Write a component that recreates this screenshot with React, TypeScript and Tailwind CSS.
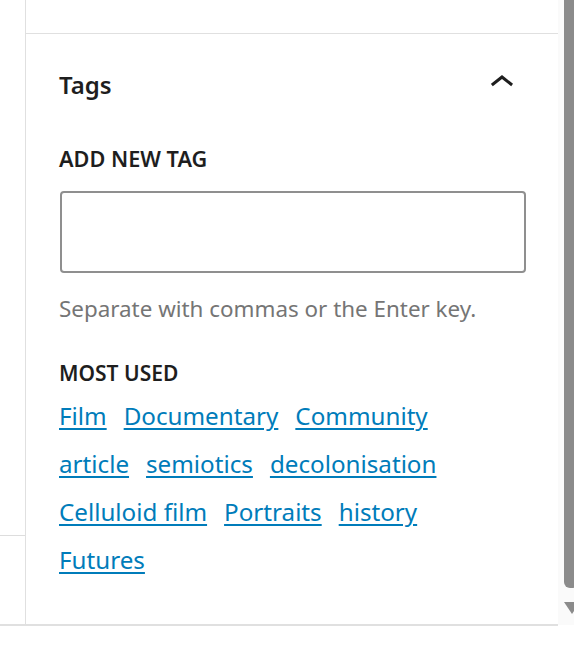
import React from "react";

const rows: string[][] = [
  ["Film", "Documentary", "Community"],
  ["article", "semiotics", "decolonisation"],
  ["Celluloid film", "Portraits", "history"],
  ["Futures"],
];

export default function App() {
  return (
    <div
      className="flex w-[574px] h-[646px] bg-white overflow-hidden"
      style={{ fontFamily: '"Noto Sans", "Open Sans", sans-serif' }}
    >
      {/* left strip */}
      <div className="w-[25px] h-[626px] shrink-0 border-b-2 border-[#e0e0e0]">
        <div className="h-[536px] border-b border-[#dddddd]" />
      </div>

      {/* panel */}
      <div className="w-[533px] h-[626px] shrink-0 border-l border-b-2 border-[#e0e0e0] flex flex-col">
        <div className="h-[34px] border-b border-[#e0e0e0]" />
        <div className="pl-[33px] pr-[32px]">
          <div className="mt-[25px] h-[48px] flex items-center justify-between">
            <div className="text-[24px] leading-[36px] font-semibold text-[#1e1e1e] mt-[3px]">Tags</div>
            <svg width="48" height="48" viewBox="0 0 24 24" className="shrink-0">
              <path d="M6.5 12.4L12 8l5.5 4.4-.9 1.2L12 10l-4.6 3.6-1-1.2z" fill="#1e1e1e" />
            </svg>
          </div>
          <div className="mt-[38px] text-[21.7px] leading-[28px] font-semibold text-[#1e1e1e] uppercase">
            Add New Tag
          </div>
          <div className="mt-[18px] ml-[1px] h-[82px] border-2 border-[#8f8f8f] rounded-[4px] bg-white" />
          <div className="mt-[20px] text-[22.4px] leading-[32px] text-[#757575]">
            Separate with commas or the Enter key.
          </div>
          <div className="mt-[34px] text-[21px] leading-[28px] font-semibold text-[#1e1e1e] uppercase">
            Most Used
          </div>
          <div className="mt-[5px] flex flex-col">
            {rows.map((r, i) => (
              <div key={i} className="flex gap-[17px] h-[48px] items-center">
                {r.map((t) => (
                  <a
                    key={t}
                    href="#"
                    className="text-[24.2px] leading-[36px] text-[#007cba] underline decoration-2 underline-offset-[3px] whitespace-nowrap"
                  >
                    {t}
                  </a>
                ))}
              </div>
            ))}
          </div>
        </div>
      </div>

      {/* scrollbar */}
      <div className="w-[16px] h-[625px] shrink-0 bg-[#fafafa] flex flex-col">
        <div className="ml-[6px] w-[14px] h-[588px] bg-[#8b8b8b] rounded-b-[6px]" />
        <svg width="16" height="14" viewBox="0 0 16 14" className="mt-[14px]">
          <polygon points="6,0 22,0 14,12" fill="#8b8b8b" />
        </svg>
      </div>
    </div>
  );
}
